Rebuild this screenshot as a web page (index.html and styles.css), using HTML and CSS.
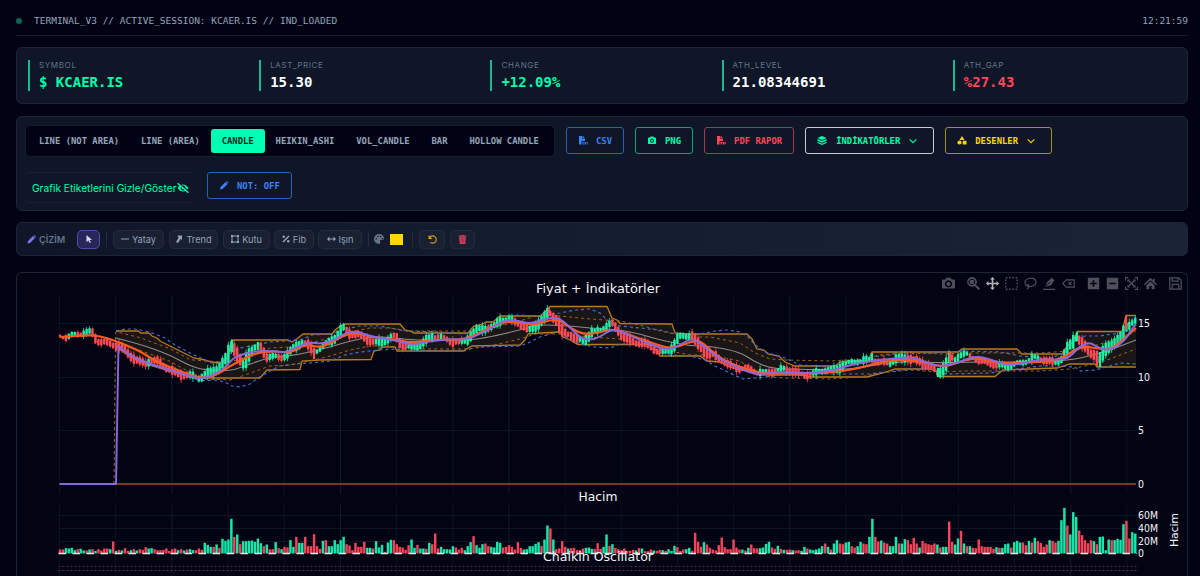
FILE: index.html
```
<!DOCTYPE html>
<html lang="tr">

<head>
	<meta charset="UTF-8" />
	<meta name="viewport" content="width=device-width, initial-scale=1.0" />
	<title>KCAER.IS Terminal</title>
	<link rel="stylesheet" href="styles.css">
</head>

<body>

	<header class="topbar">
		<span class="status-dot"></span>
		<span>TERMINAL_V3 // ACTIVE_SESSION: KCAER.IS // IND_LOADED</span>
		<span class="clock">12:21:59</span>
	</header>

	<section class="card stats">
		<div class="stat"><label>SYMBOL</label><b class="up">$ KCAER.IS</b></div>
		<div class="stat"><label>LAST_PRICE</label><b>15.30</b></div>
		<div class="stat"><label>CHANGE</label><b class="up">+12.09%</b></div>
		<div class="stat"><label>ATH_LEVEL</label><b>21.08344691</b></div>
		<div class="stat"><label>ATH_GAP</label><b class="down">%27.43</b></div>
	</section>

	<section class="card controls">
		<div class="tabs">
			<button>LINE (NOT AREA)</button>
			<button>LINE (AREA)</button>
			<button class="active">CANDLE</button>
			<button>HEIKIN_ASHI</button>
			<button>VOL_CANDLE</button>
			<button>BAR</button>
			<button>HOLLOW CANDLE</button>
		</div>
		<button class="btn blue">
			<svg viewBox="0 0 20 18"><path d="M2 0h7v6h5v4H7v7H2zM10 0l4 5h-4z" /><path d="M9 12h3v1.5h-1.5v2H12V17H9zm4 0h3v1.5h-1.5v.6H16V17h-3v-1.4h1.5V15H13zm4 0h1l.5 3 .5-3h1l-1 5h-1z" /></svg>CSV
		</button>
		<button class="btn green">
			<svg viewBox="0 0 20 18"><path fill-rule="evenodd" d="M6 3l1-2h6l1 2h2.500q1.500 0 1.500 1.500v10q0 1.500-1.500 1.500h-13Q2 16 2 14.500v-10Q2 3 3.500 3zm4 2.500a4 4 0 1 0 .01 0zm0 2a2 2 0 1 1-.01 0z" /></svg>PNG
		</button>
		<button class="btn red">
			<svg viewBox="0 0 20 18"><path d="M2 0h7v6h5v4H7v7H2zM10 0l4 5h-4z" /><path d="M9 12h3v3h-1.500v2H9zm4 0h3v5h-3zm4 0h3v1.500h-1.500v1H20V16h-1.500v1H17z" /></svg>PDF RAPOR
		</button>
		<button class="btn white">
			<svg viewBox="0 0 20 18"><path d="M10 0l9 4-9 4-9-4zM1 6l9 4 9-4v3.500l-9 4-9-4zm0 5.500l9 4 9-4V14l-9 4-9-4z" /></svg>İNDİKATÖRLER<svg class="chevron" viewBox="0 0 12 8"><path d="M1 1.500l5 5 5-5" /></svg>
		</button>
		<button class="btn yellow">
			<svg viewBox="0 0 20 18"><path d="M10 0l5 8H5z" /><circle cx="5" cy="13" r="4.200" /><path d="M11.500 9.500h7.500v7.500h-7.500z" /></svg>DESENLER<svg class="chevron" viewBox="0 0 12 8"><path d="M1 1.500l5 5 5-5" /></svg>
		</button>
		<div class="label-toggle">Grafik Etiketlerini Gizle/Göster<svg viewBox="0 0 20 16"><path fill-rule="evenodd" d="M1 8q4-6 9-6t9 6q-4 6-9 6T1 8zm9-4a4 4 0 1 0 .01 0zm0 2a2 2 0 1 1-.01 0z" /><path d="M3 0l17 14" stroke="#0f172a" stroke-width="2" /><path d="M1 0l18 16" stroke="currentColor" stroke-width="2.200" /></svg></div>
		<button class="btn blue note">
			<svg viewBox="0 0 18 18"><path d="M1 17l1-5L12 2l4 4L6 16zM13 1q1.500-1.500 3 0l1 1q1.500 1.500 0 3z" /></svg>NOT: OFF
		</button>
	</section>

	<section class="card toolbar">
		<span class="draw-title"><svg viewBox="0 0 18 18"><path d="M1 17l1-5L12 2l4 4L6 16zM13 1q1.500-1.500 3 0l1 1q1.500 1.500 0 3z" /></svg>ÇİZİM</span>
		<button class="tool select"><svg viewBox="0 0 16 16"><path d="M3 0l11 10H9l3 5-2.500 1L7 11l-4 3z" /></svg></button>
		<i class="sep"></i>
		<button class="tool yatay"><svg viewBox="0 0 16 16"><path d="M0 7h16v2H0z" /></svg>Yatay</button>
		<button class="tool trend"><svg viewBox="0 0 16 16"><path d="M5 1h9v9l-3-2-5 8-4-2 5-8z" /></svg>Trend</button>
		<button class="tool kutu"><svg viewBox="0 0 16 16"><path fill-rule="evenodd" d="M0 0h4v1h8V0h4v4h-1v8h1v4h-4v-1H4v1H0v-4h1V4H0zm4 3v1H3v8h1v1h8v-1h1V4h-1V3z" /></svg>Kutu</button>
		<button class="tool fib"><svg viewBox="0 0 16 16"><path d="M13 1l2 2L3 15l-2-2z" /><circle cx="3.500" cy="3.500" r="2.500" /><circle cx="12.500" cy="12.500" r="2.500" /></svg>Fib</button>
		<button class="tool isin"><svg viewBox="0 0 18 16"><path d="M0 8l5-5v4h8V3l5 5-5 5V9H5v4z" /></svg>Işın</button>
		<i class="sep"></i>
		<svg class="palette" viewBox="0 0 18 18"><path fill-rule="evenodd" d="M9 0a9 9 0 0 1 9 8q0 3-4 3h-2q-2 0-1 3t-2 4A9 9 0 0 1 9 0zM4 7a1.200 1.200 0 1 0 .01 0zm3-4a1.200 1.200 0 1 0 .01 0zm5 0a1.200 1.200 0 1 0 .01 0zm3 4a1.200 1.200 0 1 0 .01 0z" /></svg>
		<span class="swatch"></span>
		<i class="sep"></i>
		<button class="tool undo"><svg viewBox="0 0 16 16"><path d="M3 4a6.500 6.500 0 1 1 1 9" fill="none" stroke="currentColor" stroke-width="2" /><path d="M1 0v7h7z" /></svg></button>
		<button class="tool trash"><svg viewBox="0 0 16 16"><path d="M1 1h4l1-1h4l1 1h4v2H1zm1 3h12l-1 12H3z" /><path d="M5.500 6v8M8 6v8m2.500-8v8" stroke="#7c2744" /></svg></button>
	</section>

	<section class="card chart-card">
		<svg id="chart" viewBox="17 273 1170 303"></svg>
		<div class="modebar">
			<svg viewBox="0 0 16 16"><path fill-rule="evenodd" d="M1 3h3l1.500-2h5L12 3h3q1 0 1 1v9q0 1-1 1H1q-1 0-1-1V4q0-1 1-1zm7 1a4.500 4.500 0 1 0 .01 0zm0 2a2.500 2.500 0 1 1-.01 0z" /></svg>
			<svg class="gap" viewBox="0 0 16 16"><path fill-rule="evenodd" d="M6 0a6 6 0 0 1 5 9.500l5 4.500-2 2-4.500-5A6 6 0 1 1 6 0zm0 2a4 4 0 1 0 .01 0z" /><path d="M3.500 3.500h5v5h-5z" /></svg>
			<svg class="on" viewBox="0 0 16 16"><path d="M8 0l3 3H9v4h4V5l3 3-3 3V9H9v4h2l-3 3-3-3h2V9H3v2L0 8l3-3v2h4V3H5z" /></svg>
			<svg viewBox="0 0 16 16"><path d="M1 1h14v14H1z" fill="none" stroke="currentColor" stroke-width="1.800" stroke-dasharray="2 2" /></svg>
			<svg viewBox="0 0 16 16"><path d="M4 11C-1 8 1 2 8 1.500S17 8 12 10.500 4 12 4 10s3 0 2 2-2 2-2 3" fill="none" stroke="currentColor" stroke-width="1.400" /></svg>
			<svg viewBox="0 0 16 16"><path d="M3 12l2-6 6-5 3 3-4 6zM0 14.500h15V16H0z" /><path d="M4 11l5-5" stroke="#020413" /></svg>
			<svg viewBox="0 0 18 16"><path d="M6 3h11v10H6L1 8zm3 3l4 4m0-4l-4 4" fill="none" stroke="currentColor" stroke-width="1.500" /></svg>
			<svg class="gap" viewBox="0 0 16 16"><path fill-rule="evenodd" d="M1 1h14v14H1zm6 3v3H4v2h3v3h2V9h3V7H9V4z" /></svg>
			<svg viewBox="0 0 16 16"><path fill-rule="evenodd" d="M1 1h14v14H1zm3 6v2h8V7z" /></svg>
			<svg viewBox="0 0 16 16"><path d="M.7 4V.7H4m8 0h3.300V4m0 8v3.300H12m-8 0H.7V12" fill="none" stroke="currentColor" stroke-width="1.400" /><path d="M3 3h3.500L3 6.500zm6.500 0H13v3.500zM3 9.500L6.500 13H3zm10 0V13H9.500z" /><path d="M4 4l8 8m0-8l-8 8" stroke="currentColor" stroke-width="1.600" /></svg>
			<svg viewBox="0 0 16 16"><path d="M8 1l3 3V2h2v4l3 3-1 1-7-6-7 6-1-1zM8 5.500l5 4.500v5H9.500v-4h-3v4H3v-5z" /></svg>
			<svg class="gap" viewBox="0 0 16 16"><path d="M1 1h11l3 3v11H1zm3 0v4h7V1M4 15V9h8v6" fill="none" stroke="currentColor" stroke-width="1.500" /></svg>
		</div>
	</section>

	<script src="chart.js"></script>

</body>

</html>
```
FILE: styles.css
```
* {
	box-sizing: border-box;
	margin: 0;
	padding: 0;
}

body {
	height: 576px;
	overflow: hidden;
	padding: 0 12px 0 16px;
	background: #010314;
	color: #94a3b8;
	font-family: Inter, sans-serif;
}

button {
	background: none;
	border: none;
	color: inherit;
	font: inherit;
	white-space: nowrap;
}

svg {
	display: block;
	flex: none;
	fill: currentColor;
}

.topbar,
.tabs,
.btn,
.stat b {
	font-family: 'DejaVu Sans Mono', monospace;
}

.topbar {
	display: flex;
	align-items: center;
	height: 36px;
	padding-top: 6px;
	border-bottom: 1px solid #141a29;
	font-size: 9.500px;
}

.status-dot {
	width: 6px;
	height: 6px;
	margin-right: 12px;
	border-radius: 50%;
	background: #0a6553;
}

.clock {
	margin-left: auto;
}

.card {
	margin-top: 12px;
	background: #0e1628;
	border: 1px solid #1b2535;
	border-radius: 6px;
}

.stats {
	display: grid;
	grid-template-columns: repeat(5, 1fr);
	gap: 8px;
	height: 57px;
	margin-top: 11px;
	padding: 12px 11px;
}

.stat {
	height: 31px;
	padding-left: 9px;
	border-left: 2px solid #1db893;
}

.stat label {
	display: block;
	font-size: 8px;
	line-height: 10px;
	letter-spacing: 0.65px;
	color: #64748b;
}

.stat b {
	display: block;
	font-size: 14px;
	line-height: 17px;
	margin-top: 4px;
	color: #fff;
}

.stat .up {
	color: #00ffaa;
}

.stat .down {
	color: #ff4757;
}

.controls {
	display: flex;
	flex-wrap: wrap;
	align-items: flex-start;
	gap: 14px 11px;
	height: 95px;
	padding: 8px;
}

.tabs {
	display: flex;
	width: 530px;
	height: 32px;
	padding: 3px 2px;
	border: 1px solid #151d2c;
	border-radius: 5px;
	background: #010314;
	font-size: 8.900px;
	font-weight: bold;
}

.tabs button {
	padding: 0 10.950px;
}

.tabs .active {
	border-radius: 3px;
	background: #00ffb2;
	color: #04251f;
}

.btn {
	display: flex;
	align-items: center;
	height: 27px;
	margin-top: 2px;
	padding: 0 11px;
	border: 1px solid;
	border-radius: 3px;
	font-size: 8.900px;
	font-weight: bold;
}

.btn svg {
	width: 10px;
	height: 9px;
	margin-right: 8px;
}

.btn .chevron {
	width: 8px;
	height: 6px;
	margin: 0 5px 0 9px;
	fill: none;
	stroke: currentColor;
	stroke-width: 1.600;
}

.blue {
	color: #3b82f6;
	border-color: #2960b8;
}

.green {
	color: #00ffaa;
	border-color: #139e7a;
}

.red {
	color: #ff4757;
	border-color: #ae3549;
}

.white {
	color: #00ffaa;
	border-color: #c4ccd4;
}

.white svg:first-child {
	margin-right: 9px;
}

.yellow {
	color: #ffd700;
	border-color: #a89016;
}

.label-toggle {
	display: flex;
	align-items: center;
	width: 171px;
	height: 31px;
	margin-top: 1px;
	padding-left: 7px;
	border-top: 1px solid #182132;
	border-bottom: 1px solid #182132;
	border-radius: 5px;
	font-size: 10.200px;
	white-space: nowrap;
	color: #00ffaa;
}

.label-toggle svg {
	width: 12px;
	height: 10px;
}

.note {
	margin-top: 1px;
}

.toolbar {
	display: flex;
	align-items: center;
	height: 34px;
	margin-top: 11px;
	padding-left: 10px;
	background: linear-gradient(90deg, #0e1628, #1b2436);
	font-size: 9.200px;
}

.draw-title {
	display: flex;
	align-items: center;
	gap: 3px;
	width: 50px;
	font-weight: 600;
	color: #64748b;
}

.draw-title svg {
	width: 9px;
	height: 9px;
	color: #7c75e8;
}

.tool {
	display: flex;
	align-items: center;
	justify-content: center;
	gap: 3px;
	height: 19px;
	margin-right: 5px;
	border: 1px solid #232c3c;
	border-radius: 5px;
	background: #182031;
}

.tool svg {
	width: 8px;
	height: 8px;
}

.select {
	width: 23px;
	margin-right: 0;
	border-color: #514bb0;
	background: #282657;
	color: #ddd9ff;
}

.yatay {
	width: 51px;
}

.trend {
	width: 49px;
}

.kutu {
	width: 47px;
	margin-right: 4px;
}

.fib {
	width: 40px;
	margin-right: 4px;
}

.isin {
	width: 44px;
	margin-right: 0;
}

.isin svg {
	width: 9px;
}

.sep {
	width: 1px;
	height: 16px;
	margin: 0 6px;
	background: #232c3c;
}

.isin + .sep {
	margin-right: 5px;
}

.palette {
	width: 10px;
	height: 10px;
	color: #64748b;
}

.swatch {
	width: 13px;
	height: 11px;
	margin: 0 3px 0 6px;
	background: #ffd700;
}

.undo {
	width: 26px;
	color: #d99a20;
}

.trash {
	width: 25px;
	color: #d63f5e;
}

.trash svg,
.undo svg {
	width: 9px;
	height: 9px;
}

.chart-card {
	position: relative;
	height: 304px;
	margin-top: 16px;
	border-bottom: none;
	border-radius: 6px 6px 0 0;
	background: #020413;
}

#chart {
	width: 1170px;
	height: 303px;
	fill: none;
}

#chart text {
	font-family: 'DejaVu Sans', sans-serif;
	fill: #f2f5fa;
}

/* plot tools float over the chart */
.modebar {
	position: absolute;
	top: 4px;
	right: 5px;
	display: flex;
	gap: 6px;
	color: #4d505b;
}

.modebar svg {
	width: 13px;
	height: 13px;
}

.modebar .gap {
	margin-left: 6px;
}

.modebar .on {
	color: #b4b6bb;
}
```
FILE: chart.js
```
const chart = document.getElementById('chart');
const X0 = 60;
const STEP = 2.954;
const UP = '#1cf0a4';
const DOWN = '#ff4a55';

// x,y pairs on the price pane
const close = '60,336 66,336 74,334 84,334 92,333 97,340 104,341 112,344 118,347 130,355 138,360 146,363 150,361 160,364 170,369 180,374 190,377 200,378 205,374 212,370 218,368 224,364 229,354 232,344 237,354 243,365 250,351 258,347 262,350 266,357 274,356 282,356 288,354 296,348 303,342 308,345 313,350 318,349 326,345 334,340 339,334 344,327 350,332 360,336 368,341 375,343 383,340 390,338 395,336 400,344 408,348 415,346 425,341 432,337 440,338 450,340 460,342 466,342 472,335 478,330 486,327 494,326 500,321 505,320 515,322 523,324 528,330 537,326 545,319 549,312 556,318 563,332 570,334 575,340 583,342 588,336 592,331 600,330 607,326 612,325 616,329 625,337 636,342 645,345 655,350 662,351 668,350 674,346 678,339 686,337 692,335 697,342 706,352 716,358 728,364 745,369 758,373 766,371 774,370 783,370 795,372 805,374 815,374 825,371 835,369 843,364 852,363 862,362 872,358 880,362 890,364 898,359 908,356 915,360 925,365 932,368 938,373 945,365 950,357 955,360 962,355 975,357 990,364 998,367 1005,366 1015,363 1025,362 1035,359 1045,359 1055,362 1062,359 1068,350 1077,336 1084,345 1090,352 1096,355 1100,362 1104,353 1110,345 1120,338 1126,326 1130,325 1136,323';
const donTop = '116,331 138,331 141,333 149,333 152,336 157,338 160,341 166,344 172,347 180,351 186,354 194,358 205,360 212,362 220,363 228,357 232,340 288,340 292,342 298,338 303,334 332,334 335,330 339,327 344,324 400,324 405,330 410,331 414,333 468,333 472,328 474,326 483,324 486,322 493,322 500,316 540,316 545,312 550,306.5 607,306.5 612,318 617,320 620,323.5 672,324 675,333 689,334 747,334 752,339 757,349 764,350 768,354 779,356 785,362 795,366 835,366 840,362 847,361 868,361 872,352 958,352 962,349 1017,349 1022,354 1062,354 1067,346 1073,342 1077,331.5 1122,331.5 1126,315.500 1136,315.5';
const donBottom = '116,346 130,357 145,364 160,368 180,374 195,378 260,378 267,370 300,369.500 302,361 320,360 371,359.5 374,351 380,350 382,347 395,347 397,351 463,351 472,346 520,345 525,340 528,334 540,333 560,332 563,337 570,340 578,344.5 652,344.5 660,356 700,356 707,361 720,362 733,368 747,371 760,375 805,375 807,377 867,377 883,373 895,369 930,369 937,371 938,376.5 995,376.5 1003,370 1057,368 1070,364 1095,364 1097,367 1136,367';
const bbTop = '116,331 125,329 135,329 145,331 155,334 165,338 175,345 190,353 205,360 215,364 225,360 232,352 240,348 255,345 270,342 285,341 300,340 312,335 330,334 345,329 360,326 380,326 390,328 405,331 440,332 465,334 475,330 490,325 505,319 515,315 540,316 550,314 560,313 575,310 590,309 600,313 608,321 620,326 640,328 660,330 675,334 700,334 715,331 728,330 740,332 748,337 755,345 765,352 785,358 800,365 830,367 850,362 870,357 900,354 935,353 960,351 1000,352 1020,356 1050,358 1065,353 1075,340 1085,336 1100,336 1120,333 1126,325 1136,316';
const bbBottom = '116,343 130,357 150,365 165,370 185,375 200,381 215,380 225,382 232,386 240,387 250,384 258,378 270,371 280,366 295,364 310,363 330,361 345,355 360,352 380,350 395,349 410,350 440,351 465,351 475,347 520,346 530,342 540,337 560,331 568,338 580,344 595,347 610,348 620,344 640,344 655,350 670,355 690,356 705,360 715,366 730,373 743,379 755,378 775,376 800,372 830,374 870,374 900,370 930,368 945,374 990,373 1010,370 1040,366 1060,366 1075,367 1080,371 1095,370 1110,366 1120,363 1136,364';
const middle = '116,338 140,344 170,355 190,366 205,370 230,371 245,366 270,357 290,356 310,352 330,347 350,341 370,337 390,337 410,340 440,340 470,340 490,337 520,330 535,325 560,325 590,328 620,330 640,334 660,340 690,346 710,346 740,352 755,362 770,368 785,369 830,370 860,368 880,364 910,361 940,363 965,362 1000,362 1040,362 1070,360 1090,356 1110,350 1136,340';
const orange = '60,337 85,335 100,336 116,341 140,351 155,361 170,367 190,375 200,378 215,376 230,366 240,361 255,353 275,351 290,353 305,344 322,348 340,337 355,332 375,338 395,339 410,343 430,340 455,340 470,338 485,330 505,321 520,323 535,325 550,320 560,320 570,328 585,335 600,332 615,329 635,337 655,344 672,349 690,342 700,340 715,355 735,366 765,374 790,373 830,373 860,368 880,362 910,359 930,364 945,367 965,360 980,358 1000,364 1040,362 1060,360 1080,346 1095,348 1110,350 1125,338 1136,328';
const purple = '60,484 116,484 118.500,346 130,356 150,364 170,370 190,376 203,379 215,374 225,368 232,359 240,355 255,351 275,351 285,353 297,347 310,342 320,344 335,340 345,333 355,331 370,336 385,339 400,341 412,345 425,342 440,340 455,339 466,340 480,334 495,326 505,320 515,320 530,324 545,319 558,317 570,327 580,338 590,340 600,337 612,329 620,331 640,340 660,348 670,350 685,342 693,338 705,347 720,359 740,369 758,375 780,371 800,374 830,371 850,365 870,361 900,358 912,357 925,362 940,367 960,362 975,356 990,359 1005,365 1020,364 1040,359 1060,360 1070,357 1080,346 1090,342 1100,349 1112,350 1125,340 1130,332 1136,324';

// volume bars, negative = closing down
const volume = [
	-12, -12, 16, 15, 17, 10, -13, 14, 9, -9, 12, -13, 8, -13, -9, -15, -15, 13, -36, 8,
	-11, 9, -16, -8, 10, -13, 9, -13, -11, -19, 15, 16, -13, -10, -10, -11, -15, -8, -13, -15,
	10, -13, 9, -12, 13, 10, -10, -15, -11, 32, 26, 20, -20, 27, -17, 44, 38, 42, 104, -50,
	57, -28, 37, 37, 38, 39, 35, 45, 31, -22, 27, -13, -13, 34, -16, 13, -20, -18, 40, 20,
	-50, 32, 32, -50, -22, -22, -58, -22, -14, 38, -40, 22, 22, 40, 28, 40, 50, -28, -24, -10,
	-32, -20, -20, -35, 17, 17, -15, 37, 18, 26, -5, 33, 41, -40, -28, -20, -18, -11, -25, 42,
	17, -26, 15, 15, -14, 32, -28, -60, -15, 20, 13, 13, 12, 22, -18, -12, -17, 10, 22, 34,
	-52, 25, 17, 28, -30, -22, 20, 18, 35, 32, -18, -20, -25, -20, -12, -34, -17, 12, 13, 22,
	22, 29, 34, -23, 42, 84, -75, 42, -13, -15, -37, -20, 15, -16, -17, -10, -10, -15, 17, 18,
	14, -14, -31, -14, 20, 57, -23, 28, -17, -13, -10, -15, -8, -8, -11, 9, -16, 15, -7, -7,
	-12, 9, -8, -11, 10, -8, 13, 8, 23, -19, -8, -12, 13, 17, -8, -62, -35, -20, 34, -27,
	-17, -12, -9, -25, -48, -19, -13, -13, -42, -18, -12, 12, -9, 17, -27, -16, -15, 16, 18, 29,
	35, -18, -14, 23, -14, 11, -11, -12, 10, -9, -10, 8, 20, -15, 12, 10, 12, 15, 22, -30,
	20, -12, 30, 40, -30, -28, 33, 35, -22, -18, 22, 35, -30, -28, 50, 104, -50, -36, 39, -33,
	-30, 22, 22, 50, -30, 30, 43, -40, -28, -47, -30, 18, -38, -31, -28, -26, -30, 27, -18, 20,
	20, -96, -35, 27, 45, -68, 30, -22, 22, -17, -16, -42, -22, -20, -20, -20, -14, 19, -17, 17,
	28, 30, -18, 34, 38, 33, -33, -25, 38, -33, 47, -37, -32, -20, -27, 40, -38, -33, 38, 100,
	137, -84, 57, 124, 110, -69, -55, -40, -31, -40, 37, -28, 50, 51, 10, 42, -40, 40, 44, 41,
	88, -98, -45, 64, 60
];

let out = '';

function parse(str) {
	return str.split(' ').map(p => p.split(',').map(Number));
}

function yAt(pts, x) {
	for (let i = 1; i < pts.length; i++) {
		if (x <= pts[i][0]) {
			const [ax, ay] = pts[i - 1];
			const [bx, by] = pts[i];
			return ay + (by - ay) * (x - ax) / (bx - ax);
		}
	}
	return pts[pts.length - 1][1];
}

function line(points, color, width, extra = '') {
	out += `<polyline points="${points}" stroke="${color}" stroke-width="${width}" ${extra}/>`;
}

// midpoint-smoothed curve for the moving averages
function curve(str, color, width, from = 0) {
	const p = parse(str);
	let d = 'M' + p[0];
	for (let i = 1; i < p.length; i++) {
		if (i <= from || i === p.length - 1) {
			d += 'L' + p[i];
		} else {
			d += `Q${p[i]} ${(p[i][0] + p[i + 1][0]) / 2},${(p[i][1] + p[i + 1][1]) / 2}`;
		}
	}
	out += `<path d="${d}" stroke="${color}" stroke-width="${width}" stroke-linejoin="round"/>`;
}

function text(x, y, str, size, width, anchor = 'start') {
	out += `<text x="${x}" y="${y}" font-size="${size}" textLength="${width}" lengthAdjust="spacingAndGlyphs" text-anchor="${anchor}">${str}</text>`;
}

// grid
for (let i = 0; i < 20; i++) {
	const x = 59.500 + i * 56.180;
	const c = [2, 5, 8, 13, 18].includes(i) ? '#151a29' : '#0d1120';
	line(`${x},296 ${x},494`, c, 1);
	line(`${x},505 ${x},576`, c, 1);
}
[323.500, 377.500, 430.500, 515.500, 528.500, 541.500].forEach(y => line(`59,${y} 1136,${y}`, '#0f1423', 1));

// channel fill and bands
out += `<polygon points="${donTop} ${parse(donBottom).reverse().join(' ')}" fill="#1a1516"/>`;
line(donTop, '#b87a1a', 1.300);
line(donBottom, '#b87a1a', 1.300);
line(bbTop, '#4c6dc8', 1.200, 'stroke-dasharray="3 3"');
line(bbBottom, '#4c6dc8', 1.200, 'stroke-dasharray="3 3"');

const mid = parse(middle);
const shifted = n => mid.map(p => [p[0], p[1] + n * (p[0] < 200 ? 0.700 : 1)].join()).join(' ');
line('114,484 115.500,333 ' + shifted(-9), '#9a6426', 1, 'stroke-dasharray="3 3"');
line(shifted(9), '#9a6426', 1, 'stroke-dasharray="3 3"');
curve(middle, '#8d8a8e', 1.100);

line('59,484 1136,484', '#a2472c', 1.300);

// candles, body height and wick length vary from day to day
const closes = parse(close);
for (let i = 0; i < volume.length; i++) {
	const x = X0 + i * STEP;
	const slope = yAt(closes, x + 3) - yAt(closes, x - 3);
	const wobble = Math.sin(i * 1.100) + Math.sin(i * 0.530);
	const up = slope + wobble * 0.900 < 0;
	const y = yAt(closes, x) + wobble * 1.300;
	const n = Math.abs(Math.sin(i * 12.989) * 43758.545) % 1;
	const h = 2.500 + Math.abs(slope) * 0.800 + n * 4;
	const wick = 0.500 + n * n * 3;
	const c = up ? UP : DOWN;
	line(`${x},${y - h / 2 - wick} ${x},${y + h / 2 + wick}`, c, 0.800);
	line(`${x},${y - h / 2} ${x},${y + h / 2}`, c, 2.500);
}

// long candles
[[232, 340, 352, UP], [243, 358, 368, UP], [258, 342, 350, UP], [314, 348, 359, DOWN], [549, 308, 316, DOWN], [872, 353, 361, UP], [938, 368, 377, UP], [950, 352, 362, DOWN], [1077, 332, 341, UP], [1097, 353, 366, DOWN], [1100, 352, 367, UP], [1126, 316, 330, DOWN]]
	.forEach(([x, a, b, c]) => line(`${x},${a} ${x},${b}`, c, 2.200));

curve(orange, '#ff5a1f', 2.200);
curve(purple, '#8b68df', 1.900, 2);

// volume
volume.forEach((v, i) => {
	const h = Math.abs(v) / 3;
	out += `<rect x="${X0 + i * STEP - 1.200}" y="${553.500 - h}" width="2.450" height="${h}" fill="${v > 0 ? '#14e8aa' : '#f44459'}"/>`;
});
line('58.500,553.500 1137,553.500', '#e5e8ee', 1.300, 'stroke-dasharray="7.500 6.500"');
line('58.500,566.500 1137,566.500', '#54203a', 1.200, 'stroke-dasharray="2 2"');
line('58.500,570.500 1137,570.500', '#732845', 1.200, 'stroke-dasharray="2 2"');

// labels
text(598, 292.500, 'Fiyat + İndikatörler', 12.500, 124, 'middle');
text(598, 501, 'Hacim', 12.500, 39, 'middle');
text(598, 561, 'Chaikin Oscillator', 12.500, 110, 'middle');
text(1138, 327, '15', 9.800, 12);
text(1138, 380.500, '10', 9.800, 12);
text(1138, 434, '5', 9.800, 6);
text(1138, 487.500, '0', 9.800, 6);
text(1138, 519, '60M', 9.800, 20);
text(1138, 532, '40M', 9.800, 20);
text(1138, 544.500, '20M', 9.800, 20);
text(1138, 557, '0', 9.800, 6);
out += '<text transform="translate(1178 547) rotate(-90)" font-size="11" textLength="34">Hacim</text>';

chart.innerHTML = out;
```
